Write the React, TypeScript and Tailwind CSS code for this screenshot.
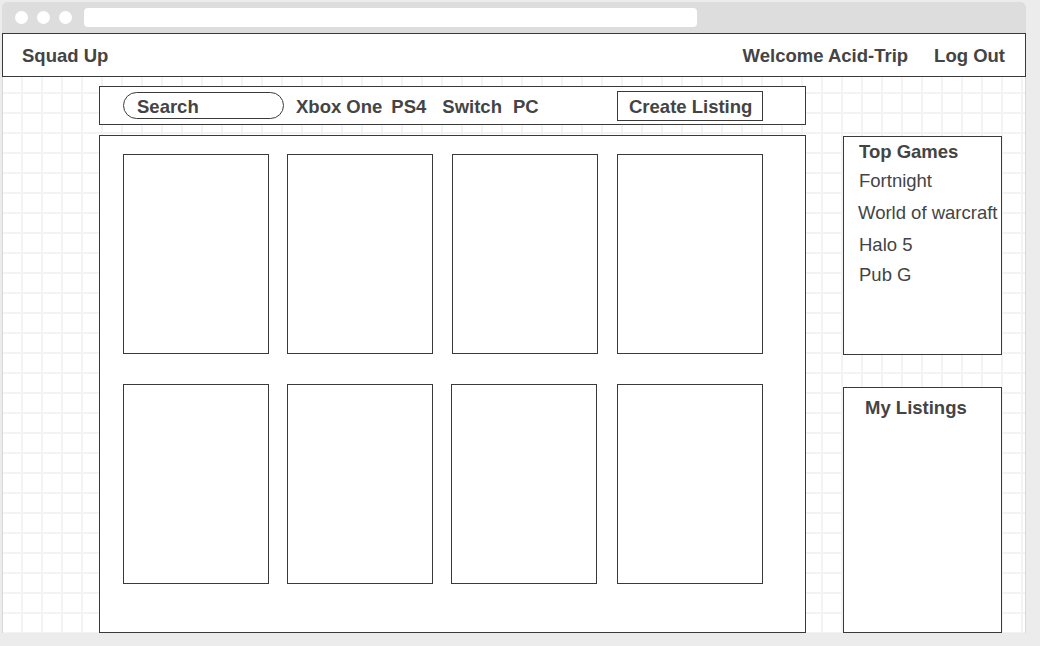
import React from "react";

const Card = ({ ml }: { ml: string }) => (
  <div className={`w-[146px] h-[200px] border border-[#3a3a3a] bg-white ${ml}`} />
);

export default function App() {
  return (
    <div className="w-[1040px] h-[646px] bg-[#ececec] pt-[2px] pl-[2px] overflow-hidden font-['Liberation_Sans',Arial,sans-serif] text-[#444444]">
      <div className="w-[1024px] h-[631px] flex flex-col bg-white rounded-t-[5px] overflow-hidden">
        {/* title bar */}
        <div className="h-[31px] shrink-0 bg-[#dddddd] flex items-center pl-[13px]">
          <div className="w-[13px] h-[13px] rounded-full bg-white" />
          <div className="w-[13px] h-[13px] rounded-full bg-white ml-[9px]" />
          <div className="w-[13px] h-[13px] rounded-full bg-white ml-[9px]" />
          <div className="w-[613px] h-[19px] rounded-[4px] bg-white ml-[12px]" />
        </div>
        {/* header */}
        <div className="h-[44px] shrink-0 border border-[#3a3a3a] bg-white flex items-center justify-between pl-[19px] pr-[20px] pt-[2px] text-[18.5px] font-bold">
          <span>Squad Up</span>
          <div className="flex items-center gap-[26px]">
            <span>Welcome Acid-Trip</span>
            <span>Log Out</span>
          </div>
        </div>
        {/* content */}
        <div className="flex-1 min-h-0 flex border-l border-r border-[#d8d8d8] bg-white bg-[linear-gradient(to_right,#f3f3f3_2px,transparent_2px),linear-gradient(to_bottom,#f3f3f3_2px,transparent_2px)] bg-[size:20px_20px] bg-[position:18px_15px] pl-[96px]">
          {/* left column */}
          <div className="w-[707px] flex flex-col pt-[9px]">
            <div className="h-[39px] shrink-0 border border-[#3a3a3a] bg-white flex items-center pl-[23px] text-[18.5px] font-bold">
              <div className="w-[161px] h-[27px] rounded-full border border-[#3a3a3a] flex items-center pl-[13px] pt-[2px]">
                Search
              </div>
              <span className="ml-[12px] pt-[2px]">Xbox One</span>
              <span className="ml-[9px] pt-[2px]">PS4</span>
              <span className="ml-[16px] pt-[2px]">Switch</span>
              <span className="ml-[11px] pt-[2px]">PC</span>
              <div className="ml-auto mr-[42px] w-[146px] h-[30px] border border-[#3a3a3a] flex items-center pl-[11px] pt-[2px]">
                Create Listing
              </div>
            </div>
            <div className="mt-[10px] flex-1 border border-[#3a3a3a] bg-white pl-[23px] pt-[18px]">
              <div className="flex">
                <Card ml="ml-0" />
                <Card ml="ml-[18px]" />
                <Card ml="ml-[19px]" />
                <Card ml="ml-[19px]" />
              </div>
              <div className="flex mt-[30px]">
                <Card ml="ml-0" />
                <Card ml="ml-[18px]" />
                <Card ml="ml-[18px]" />
                <Card ml="ml-[20px]" />
              </div>
            </div>
          </div>
          {/* right column */}
          <div className="w-[159px] ml-[37px] flex flex-col pt-[59px]">
            <div className="h-[219px] shrink-0 border border-[#3a3a3a] bg-white pl-[15px] pt-[4px] text-[18.5px] leading-[21px]">
              <div className="font-bold">Top Games</div>
              <div className="mt-[8px]">Fortnight</div>
              <div className="mt-[11px] -ml-[1px] whitespace-nowrap">World of warcraft</div>
              <div className="mt-[11px]">Halo 5</div>
              <div className="mt-[9px]">Pub G</div>
            </div>
            <div className="mt-[32px] flex-1 border border-[#3a3a3a] bg-white pl-[21px] pt-[9px] text-[18.5px] leading-[21px] font-bold">
              My Listings
            </div>
          </div>
        </div>
      </div>
    </div>
  );
}
